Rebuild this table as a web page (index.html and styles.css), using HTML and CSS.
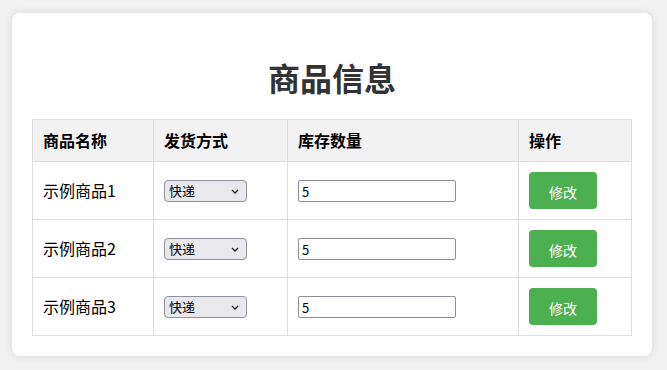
FILE: index.html
```html
<!DOCTYPE html>
<html lang="zh-CN">
<head>
  <meta charset="UTF-8" />
  <meta name="viewport" content="width=device-width, initial-scale=1.0" />
  <title>商品信息</title>
  <link rel="stylesheet" href="styles.css">
</head>
<body>
  <div class="container">
    <h1>商品信息</h1>
    <table class="goods">
      <thead>
        <tr>
          <th class="col-name">商品名称</th>
          <th class="col-ship">发货方式</th>
          <th class="col-stock">库存数量</th>
          <th class="col-op">操作</th>
        </tr>
      </thead>
      <tbody>
        <tr>
          <td>示例商品1</td>
          <td><select class="ship"><option>快递</option><option>自提</option></select></td>
          <td><input class="stock" type="number" value="5"></td>
          <td><button class="edit-btn">修改</button></td>
        </tr>
        <tr>
          <td>示例商品2</td>
          <td><select class="ship"><option>快递</option><option>自提</option></select></td>
          <td><input class="stock" type="number" value="5"></td>
          <td><button class="edit-btn">修改</button></td>
        </tr>
        <tr>
          <td>示例商品3</td>
          <td><select class="ship"><option>快递</option><option>自提</option></select></td>
          <td><input class="stock" type="number" value="5"></td>
          <td><button class="edit-btn">修改</button></td>
        </tr>
      </tbody>
    </table>
  </div>
</body>
</html>
```

FILE: styles.css
```css
* {
  box-sizing: border-box;
}

body {
  margin: 0;
  padding: 13px 15px 14px 12px;
  background: #f2f2f2;
  font-family: "Microsoft YaHei", "Noto Sans CJK SC", "Noto Sans", sans-serif;
  color: #000;
}

.container {
  background: #fff;
  border-radius: 8px;
  padding: 20px;
  box-shadow: 0 0 10px rgba(0, 0, 0, 0.1);
}

h1 {
  text-align: center;
  font-size: 32px;
  line-height: 40px;
  margin: 24px 0 22px;
  color: #333;
}

.goods {
  width: 100%;
  border-collapse: collapse;
  font-size: 16px;
}

.goods th,
.goods td {
  border: 1px solid #ddd;
  padding: 10px;
  text-align: left;
  line-height: 21px;
}

.goods th {
  background: #f2f2f2;
  font-weight: bold;
}

.col-name { width: 121px; }
.col-ship { width: 134px; }
.col-stock { width: 231px; }
.col-op { width: 113px; }

.ship {
  -webkit-appearance: none;
  appearance: none;
  width: 83px;
  height: 22px;
  font-family: inherit;
  font-size: 13px;
  line-height: 20px;
  background: #e9e9ed url("data:image/svg+xml,%3Csvg xmlns='http://www.w3.org/2000/svg' width='8' height='5' viewBox='0 0 8 5'%3E%3Cpath d='M1 1l3 3 3-3' fill='none' stroke='%23222' stroke-width='1.3'/%3E%3C/svg%3E") no-repeat right 7px center;
  border: 1px solid #8f8f9d;
  border-radius: 4px;
  padding: 0 4px;
  color: #000;
  vertical-align: middle;
}

.stock {
  width: 158px;
  height: 22px;
  font-family: inherit;
  font-size: 13px;
  border: 1px solid #8f8f9d;
  border-radius: 2px;
  padding: 0 3px;
  vertical-align: middle;
}

.edit-btn {
  background: #4caf50;
  color: #fff;
  border: none;
  border-radius: 4px;
  padding: 10px 20px;
  height: 37px;
  font-family: inherit;
  font-size: 14px;
  cursor: pointer;
  vertical-align: middle;
}
```
